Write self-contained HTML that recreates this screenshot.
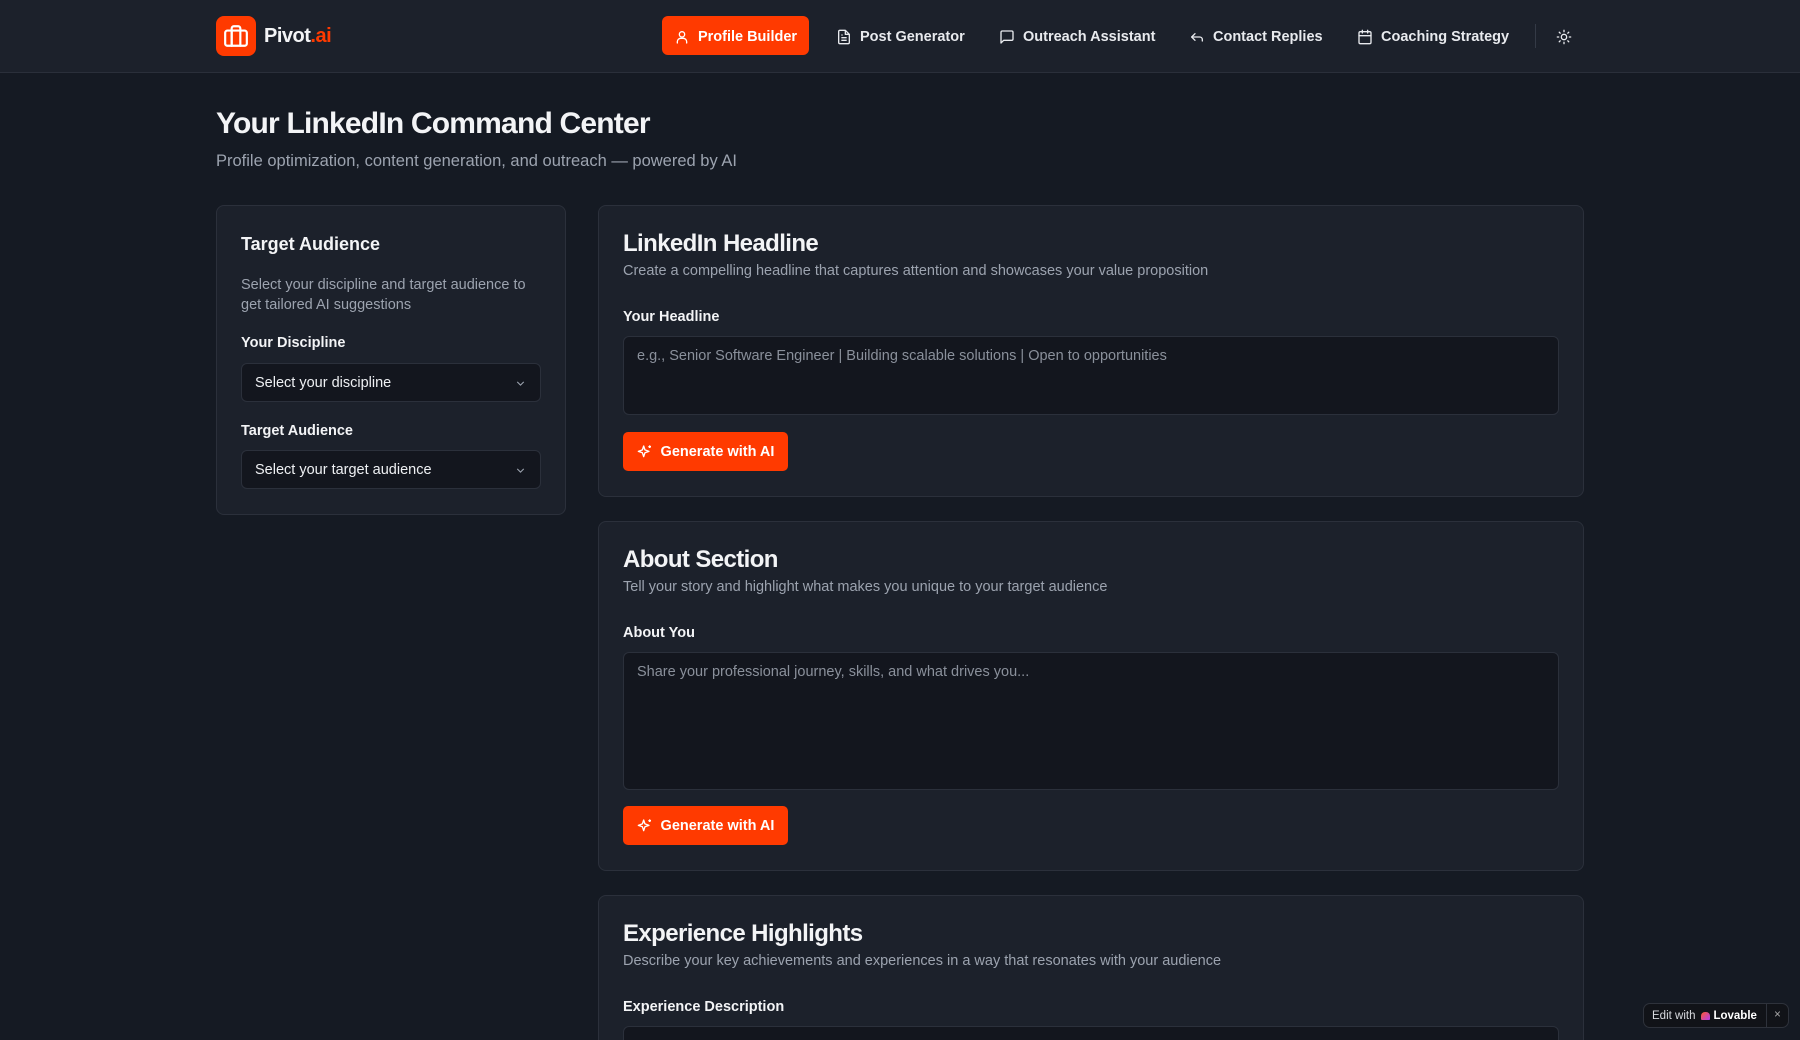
<!DOCTYPE html>
<html><head><meta charset="utf-8"><style>
*{box-sizing:border-box;margin:0;padding:0}
html{width:1800px;height:1040px;overflow:hidden;background:#151a23}
body{width:1800px;height:1040px;overflow:hidden;background:#151a23;font-family:"Liberation Sans",sans-serif;color:#f3f4f6;position:relative}
.hdr{position:absolute;left:0;top:0;width:1800px;height:73px;background:#1c212b;border-bottom:1px solid #2a2f3a}
.logo{position:absolute;left:216px;top:16px;width:40px;height:40px;border-radius:8px;background:#ff3a00;display:flex;align-items:center;justify-content:center}
.brand{position:absolute;left:264px;top:25px;font-size:20px;font-weight:700;letter-spacing:-0.5px}
.brand span{color:#ff3a00}
.nav{position:absolute;top:16px;height:39px;display:flex;align-items:center;font-size:14.5px;font-weight:700;color:#e8eaee;padding-top:2px}
.nav svg{margin-right:8px}
.pb{left:662px;width:147px;background:#ff3a00;border-radius:6px;justify-content:center;color:#fff}
.sep{position:absolute;left:1535px;top:24px;width:1px;height:24px;background:#343a46}
h1{position:absolute;left:216px;top:107px;font-size:30px;font-weight:700;letter-spacing:-0.8px}
.sub{position:absolute;left:216px;top:152px;font-size:16.5px;color:#9ca3af}
.card{position:absolute;background:#1c212b;border:1px solid #2b303b;border-radius:8px}
.ct{position:absolute;font-weight:700}
.cd{position:absolute;color:#9ca3af;font-size:14.5px;line-height:20px}
.lb{position:absolute;font-size:14.5px;font-weight:700}
.sel{position:absolute;background:#13161e;border:1px solid #2b303b;border-radius:6px;font-size:14.5px;padding-left:13px;display:flex;align-items:center;color:#eef0f3}
.sel svg{position:absolute;right:13px;top:13px}
.ta{position:absolute;background:#13161e;border:1px solid #2b303b;border-radius:6px;font-size:14.5px;color:#8a909b;padding:11px 13px}
.btn{position:absolute;background:#ff3a00;border-radius:5px;color:#fff;font-size:14.5px;font-weight:700;display:flex;align-items:center;justify-content:center;width:165px;height:39px}
.btn svg{margin-right:8px}
</style></head><body>
<div class="hdr">
<div class="logo"><svg width="26" height="26" viewBox="0 0 24 24" fill="none" stroke="#fff" stroke-width="2" stroke-linecap="round" stroke-linejoin="round"><rect x="2" y="7" width="20" height="14" rx="2"/><path d="M16 21V5a2 2 0 0 0-2-2h-4a2 2 0 0 0-2 2v16"/><path d="M8 7v14"/></svg></div>
<div class="brand">Pivot<span>.ai</span></div>
<div class="nav pb"><svg width="16" height="16" viewBox="0 0 24 24" fill="none" stroke="#fff" stroke-width="2" stroke-linecap="round"><circle cx="12" cy="8" r="4"/><path d="M5 21v-2a5 5 0 0 1 5-5h4a5 5 0 0 1 5 5v2"/></svg>Profile Builder</div>
<div class="nav" style="left:836px"><svg width="16" height="16" viewBox="0 0 24 24" fill="none" stroke="#e8eaee" stroke-width="2" stroke-linejoin="round"><path d="M14 2H6a2 2 0 0 0-2 2v16a2 2 0 0 0 2 2h12a2 2 0 0 0 2-2V8z"/><path d="M14 2v6h6M8 13h8M8 17h8M8 9h2"/></svg>Post Generator</div>
<div class="nav" style="left:999px"><svg width="16" height="16" viewBox="0 0 24 24" fill="none" stroke="#e8eaee" stroke-width="2" stroke-linejoin="round"><path d="M21 15a2 2 0 0 1-2 2H7l-4 4V5a2 2 0 0 1 2-2h14a2 2 0 0 1 2 2z"/></svg>Outreach Assistant</div>
<div class="nav" style="left:1189px"><svg width="16" height="16" viewBox="0 0 24 24" fill="none" stroke="#e8eaee" stroke-width="2" stroke-linecap="round" stroke-linejoin="round"><path d="M9 17l-5-5 5-5"/><path d="M20 18v-2a4 4 0 0 0-4-4H4"/></svg>Contact Replies</div>
<div class="nav" style="left:1357px"><svg width="16" height="16" viewBox="0 0 24 24" fill="none" stroke="#e8eaee" stroke-width="2" stroke-linecap="round"><rect x="3" y="4" width="18" height="18" rx="2"/><path d="M16 2v4M8 2v4M3 10h18"/></svg>Coaching Strategy</div>
<div class="sep"></div>
<div class="nav" style="left:1556px"><svg width="16" height="16" viewBox="0 0 24 24" fill="none" stroke="#e8eaee" stroke-width="2" stroke-linecap="round"><circle cx="12" cy="12" r="4"/><path d="M12 2v2M12 20v2M4.9 4.9l1.4 1.4M17.7 17.7l1.4 1.4M2 12h2M20 12h2M6.3 17.7l-1.4 1.4M19.1 4.9l-1.4 1.4"/></svg></div>
</div>
<h1>Your LinkedIn Command Center</h1>
<div class="sub">Profile optimization, content generation, and outreach — powered by AI</div>

<div class="card" style="left:216px;top:205px;width:350px;height:310px"></div>
<div class="ct" style="left:241px;top:234px;font-size:18px">Target Audience</div>
<div class="cd" style="left:241px;top:275px;width:300px">Select your discipline and target audience to get tailored AI suggestions</div>
<div class="lb" style="left:241px;top:335px">Your Discipline</div>
<div class="sel" style="left:241px;top:363px;width:300px;height:39px">Select your discipline<svg width="13" height="13" viewBox="0 0 24 24" fill="none" stroke="#9ca3af" stroke-width="2"><path d="M6 9l6 6 6-6"/></svg></div>
<div class="lb" style="left:241px;top:423px">Target Audience</div>
<div class="sel" style="left:241px;top:450px;width:300px;height:39px">Select your target audience<svg width="13" height="13" viewBox="0 0 24 24" fill="none" stroke="#9ca3af" stroke-width="2"><path d="M6 9l6 6 6-6"/></svg></div>

<div class="card" style="left:598px;top:205px;width:986px;height:292px"></div>
<div class="ct" style="left:623px;top:230px;font-size:24px;letter-spacing:-0.6px">LinkedIn Headline</div>
<div class="cd" style="left:623px;top:261px">Create a compelling headline that captures attention and showcases your value proposition</div>
<div class="lb" style="left:623px;top:309px">Your Headline</div>
<div class="ta" style="left:623px;top:336px;width:936px;height:79px">e.g., Senior Software Engineer | Building scalable solutions | Open to opportunities</div>
<div class="btn" style="left:623px;top:432px"><svg width="16" height="16" viewBox="0 0 24 24" fill="none" stroke="#fff" stroke-width="2" stroke-linejoin="round"><path d="M10 3l1.9 5.8L18 11l-6.1 2.2L10 19l-1.9-5.8L2 11l6.1-2.2z"/><path d="M19 2v4M17 4h4"/></svg>Generate with AI</div>

<div class="card" style="left:598px;top:521px;width:986px;height:350px"></div>
<div class="ct" style="left:623px;top:546px;font-size:24px;letter-spacing:-0.6px">About Section</div>
<div class="cd" style="left:623px;top:577px">Tell your story and highlight what makes you unique to your target audience</div>
<div class="lb" style="left:623px;top:625px">About You</div>
<div class="ta" style="left:623px;top:652px;width:936px;height:138px">Share your professional journey, skills, and what drives you...</div>
<div class="btn" style="left:623px;top:806px"><svg width="16" height="16" viewBox="0 0 24 24" fill="none" stroke="#fff" stroke-width="2" stroke-linejoin="round"><path d="M10 3l1.9 5.8L18 11l-6.1 2.2L10 19l-1.9-5.8L2 11l6.1-2.2z"/><path d="M19 2v4M17 4h4"/></svg>Generate with AI</div>

<div class="card" style="left:598px;top:895px;width:986px;height:160px"></div>
<div class="ct" style="left:623px;top:920px;font-size:24px;letter-spacing:-0.6px">Experience Highlights</div>
<div class="cd" style="left:623px;top:951px">Describe your key achievements and experiences in a way that resonates with your audience</div>
<div class="lb" style="left:623px;top:999px">Experience Description</div>
<div class="ta" style="left:623px;top:1026px;width:936px;height:40px"></div>

<div style="position:absolute;left:1643px;top:1003px;width:146px;height:25px;background:#111318;border:1px solid #2e323b;border-radius:7px;font-size:11.5px;color:#d8dadf;display:flex;align-items:center;padding-left:8px">Edit with <span style="display:inline-block;width:9px;height:8px;margin:0 3px 0 6px;border-radius:4px 4px 1px 1px;background:linear-gradient(135deg,#ff5a2b,#b23cf0)"></span><b style="color:#fff">Lovable</b><span style="position:absolute;right:0;top:0;width:22px;height:23px;border-left:1px solid #2e323b;text-align:center;line-height:23px;color:#aaa">×</span></div>
</body></html>
